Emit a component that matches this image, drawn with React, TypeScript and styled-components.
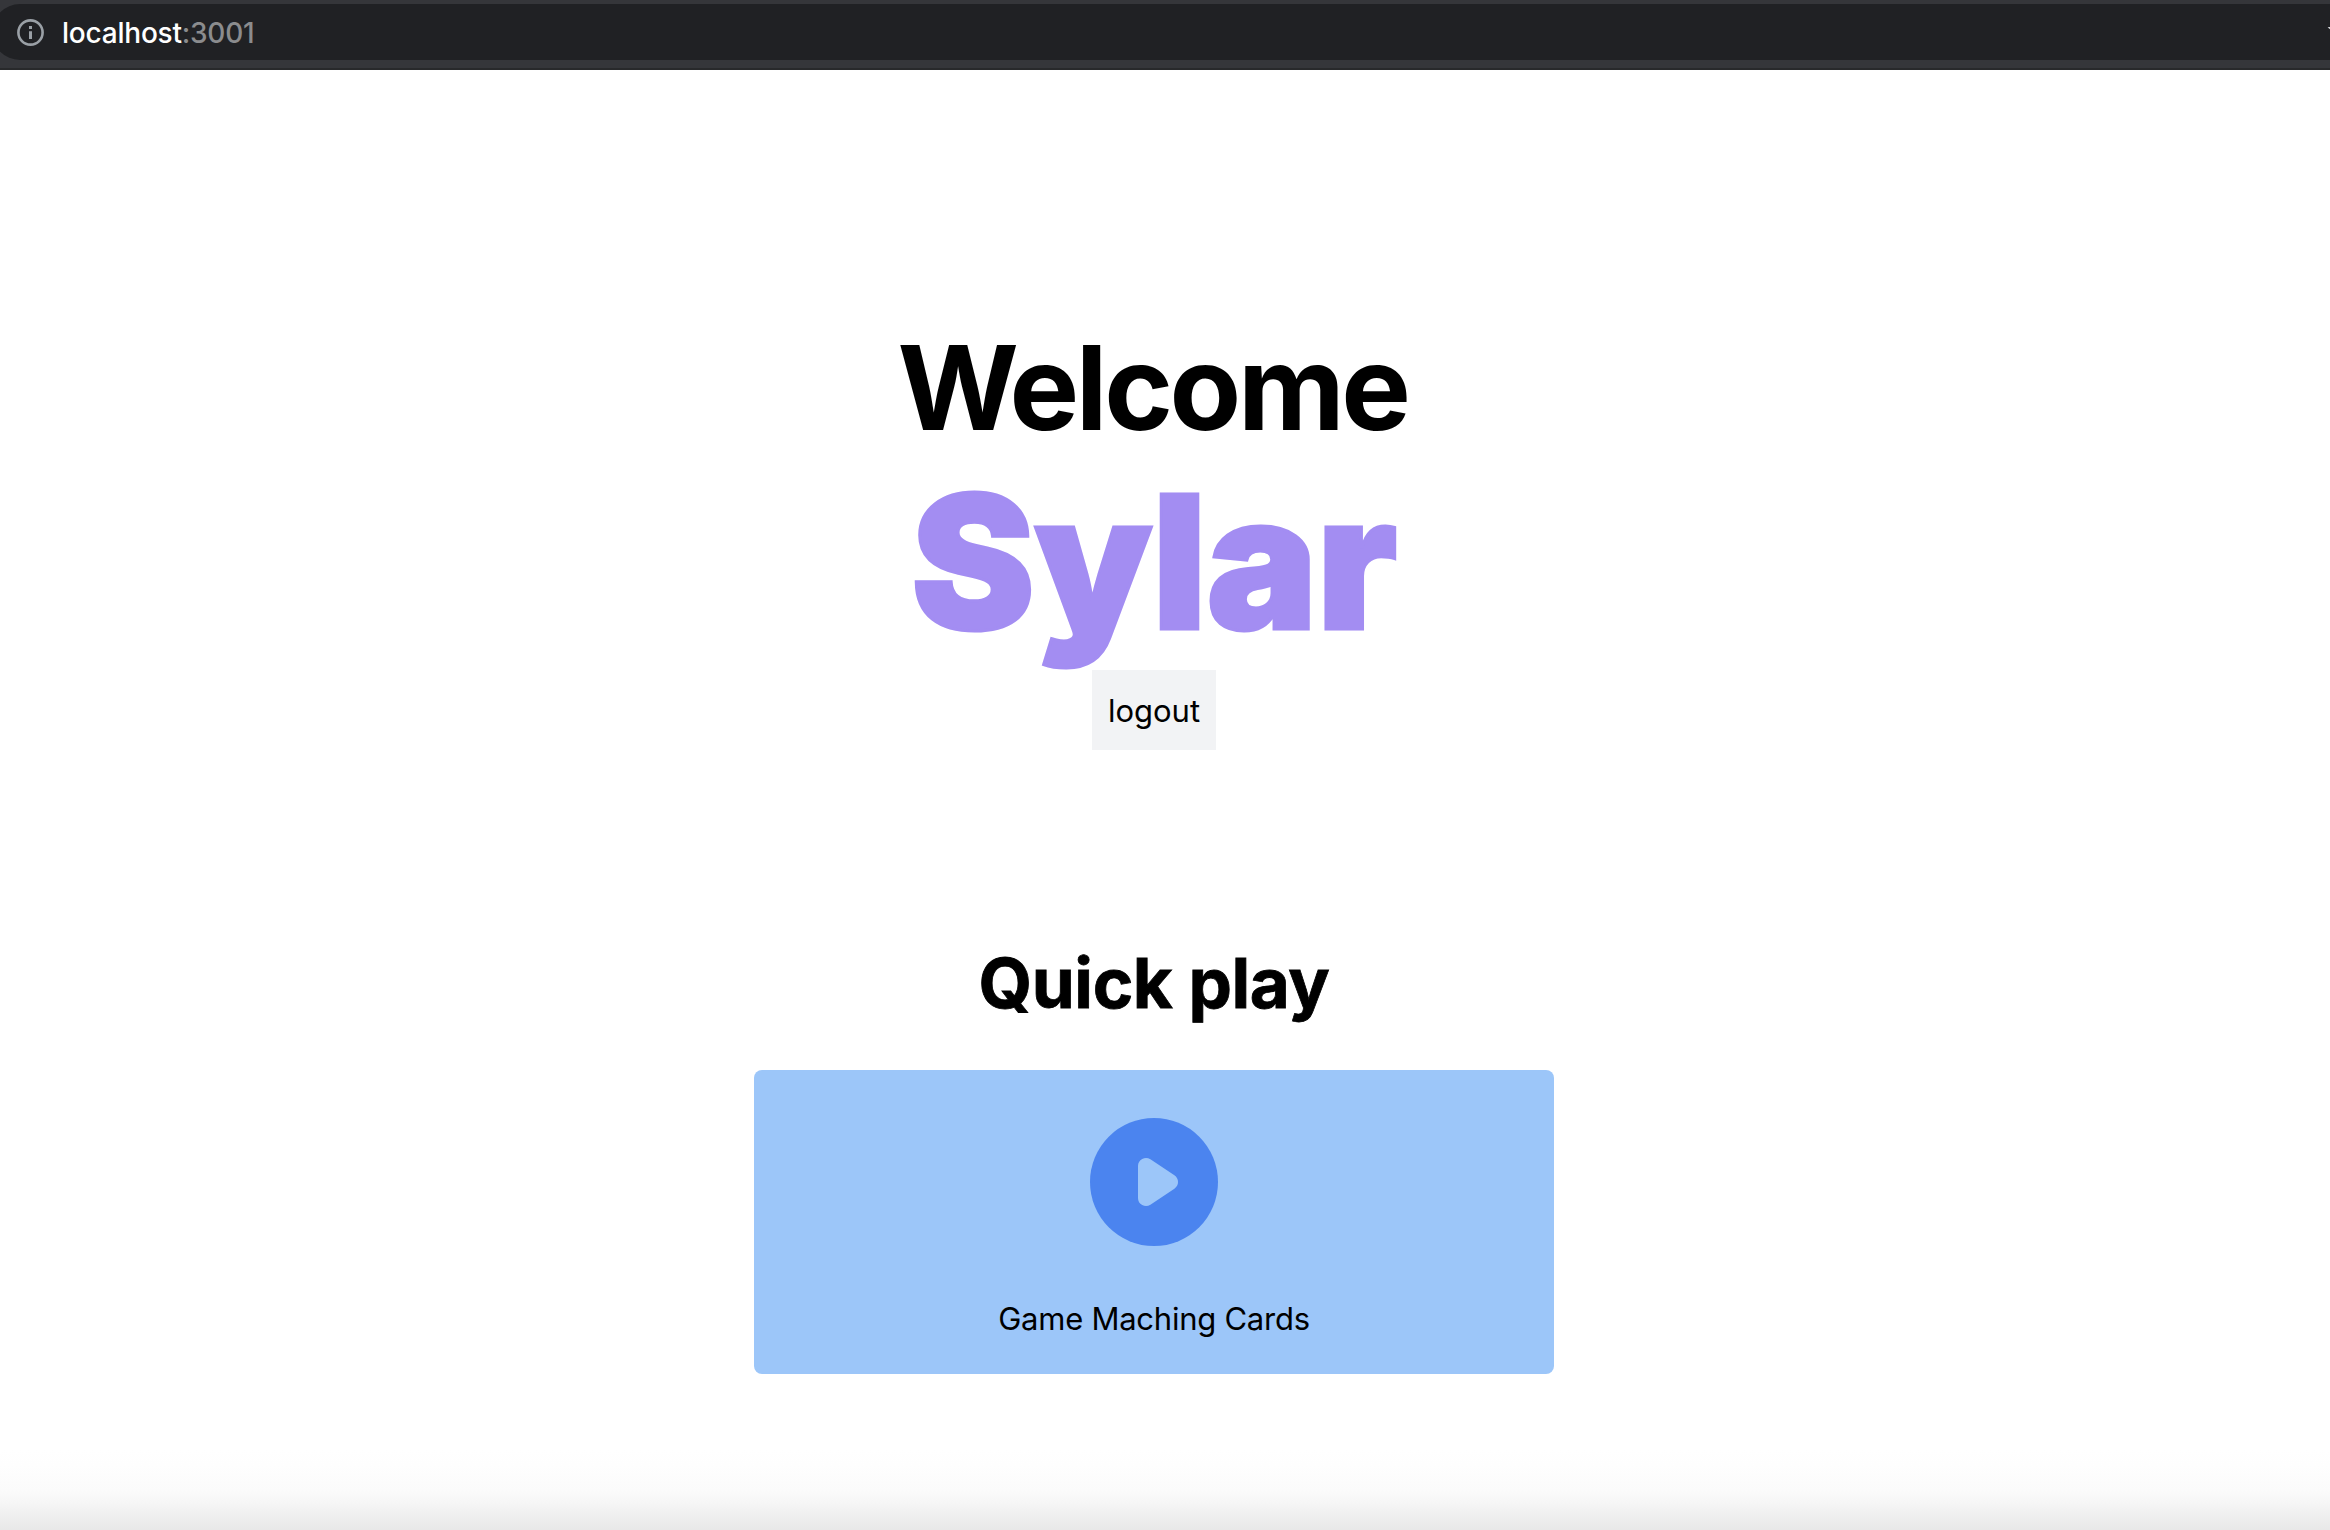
import React from "react";
import styled, { createGlobalStyle } from "styled-components";

const GlobalStyle = createGlobalStyle`
  *, *::before, *::after { box-sizing: border-box; }
  body { margin: 0; background: #fff; color: #000; font-family: Inter, Roboto, sans-serif; overflow: hidden; }
  h1, h2, p { margin: 0; }
`;

const Page = styled.div`
  display: flex;
  flex-direction: column;
  width: 100%;
  height: 1530px;
  overflow: hidden;
`;

const BrowserBar = styled.header`
  flex: none;
  height: 70px;
  padding-top: 4px;
  background: #35363a;
  border-bottom: 2px solid #28292b;
  overflow: hidden;
`;

const AddressField = styled.div`
  display: flex;
  align-items: center;
  height: 56px;
  margin-left: -8px;
  margin-right: -60px;
  padding-left: 25px;
  padding-right: 33px;
  border-radius: 28px;
  background: #202124;
`;

const InfoIcon = styled.svg`
  width: 27px;
  height: 27px;
  flex: none;
`;

const Address = styled.span`
  flex: 1;
  margin-left: 18px;
  padding-top: 1px;
  font-size: 28px;
  font-weight: 450;
  line-height: 36px;
  letter-spacing: -0.22px;
  color: #fff;
`;

const Port = styled.span`
  color: #8b8c8e;
`;

const StarIcon = styled.svg`
  width: 30px;
  height: 30px;
  flex: none;
`;

const Main = styled.main`
  flex: 1;
  display: flex;
  flex-direction: column;
  align-items: center;
  padding: 258px 22px 0 0;
`;

const Greeting = styled.h1`
  display: flex;
  flex-direction: column;
  align-items: center;
  font-size: 117px;
  font-weight: 700;
  line-height: 120px;
  letter-spacing: -3.4px;
  margin-right: 3px;
`;

const UserName = styled.span`
  font-size: 186px;
  font-weight: 900;
  line-height: 192px;
  letter-spacing: -0.6px;
  -webkit-text-stroke: 3px #a38df2;
  color: #a38df2;
  margin-top: 18px;
  margin-left: 3px;
`;

const LogoutButton = styled.button`
  width: 124px;
  height: 80px;
  margin-top: 12px;
  padding: 2px 0 0;
  border: 0;
  background: #f2f3f5;
  font: 400 31px/48px Inter, Roboto, sans-serif;
  color: #000;
`;

const SectionTitle = styled.h2`
  margin-top: 197px;
  font-size: 69px;
  font-weight: 700;
  line-height: 72px;
  letter-spacing: -0.4px;
  -webkit-text-stroke: 0.8px #000;
`;

const GameCard = styled.section`
  display: flex;
  flex-direction: column;
  align-items: center;
  width: 800px;
  height: 304px;
  margin-top: 51px;
  padding-top: 48px;
  border-radius: 8px;
  background: #9cc6f9;
`;

const PlayIcon = styled.svg`
  width: 128px;
  height: 128px;
`;

const GameName = styled.p`
  margin-top: 49px;
  font-size: 31px;
  line-height: 48px;
  letter-spacing: -0.25px;
`;

const BottomShade = styled.footer`
  flex: none;
  height: 80px;
  background: linear-gradient(#fff 0%, #fefefe 20%, #fbfbfb 50%, #f6f6f6 66%, #efefef 82%, #e8e8e8 100%);
`;

export default function App() {
  return (
    <Page>
      <GlobalStyle />
      <BrowserBar>
        <AddressField>
          <InfoIcon viewBox="0 0 27 27">
            <circle cx="13.5" cy="13.5" r="12.1" fill="none" stroke="#9aa0a6" strokeWidth="2.6" />
            <path d="M12 7h3v3h-3zM12 12.2h3v7.8h-3z" fill="#9aa0a6" />
          </InfoIcon>
          <Address>
            localhost<Port>:3001</Port>
          </Address>
          <StarIcon viewBox="0 0 30 30">
            <path d="M3 11l9-1 3-8 3 8 9 1-7 6 2 9-7-5-7 5 2-9z" fill="none" stroke="#dadce0" strokeWidth="2" />
          </StarIcon>
        </AddressField>
      </BrowserBar>
      <Main>
        <Greeting>
          Welcome
          <UserName>Sylar</UserName>
        </Greeting>
        <LogoutButton>logout</LogoutButton>
        <SectionTitle>Quick play</SectionTitle>
        <GameCard>
          <PlayIcon viewBox="0 0 128 128">
            <circle cx="64" cy="64" r="64" fill="#4b84ef" />
            <path d="M48 48a8 8 0 0 1 12.4-6.7l24 16a8 8 0 0 1 0 13.4l-24 16A8 8 0 0 1 48 80z" fill="#9cc6f9" />
          </PlayIcon>
          <GameName>Game Maching Cards</GameName>
        </GameCard>
      </Main>
      <BottomShade />
    </Page>
  );
}
